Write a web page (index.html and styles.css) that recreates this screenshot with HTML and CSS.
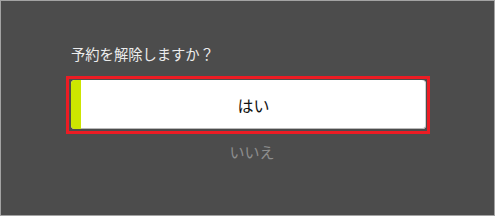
FILE: index.html
```html
<!DOCTYPE html>
<html lang="ja">
<head>
<meta charset="utf-8">
<link rel="stylesheet" href="styles.css">
</head>
<body>
<div class="dialog">
  <div class="title">予約を解除しますか？</div>
  <div class="focus">
    <div class="btn">
      <span class="strip"></span>
      <span class="label">はい</span>
    </div>
  </div>
  <div class="no">いいえ</div>
</div>
</body>
</html>
```
FILE: styles.css
```css
html, body {
  margin: 0;
  padding: 0;
}
body {
  width: 495px;
  height: 216px;
  box-sizing: border-box;
  border: 1px solid #a3a3a3;
  background: #4c4c4c;
  font-family: "Noto Sans CJK JP", "Noto Sans", sans-serif;
  overflow: hidden;
}
.dialog {
  padding-top: 43px;
  padding-left: 65px;
}
.title {
  margin-left: 5px;
  font-size: 14.3px;
  line-height: 20px;
  color: #ececec;
}
.focus {
  margin-top: 12px;
  width: 364px;
  height: 58px;
  box-sizing: border-box;
  border: 3px solid #ec1c24;
  padding: 1px 1px 2px 2px;
}
.btn {
  display: flex;
  height: 49px;
  background: #fff;
  border-radius: 4px;
  overflow: hidden;
  box-shadow: inset 0 -1px 0 #b8b8b8, inset -1px 0 0 #d0d0d0;
}
.strip {
  width: 10px;
  flex: none;
  background: #cde600;
}
.label {
  flex: 1;
  display: flex;
  align-items: center;
  justify-content: center;
  font-size: 16px;
  color: #111;
}
.no {
  width: 364px;
  margin-top: 8px;
  padding-left: 8px;
  box-sizing: border-box;
  text-align: center;
  font-size: 15px;
  line-height: 20px;
  color: #8e8e8e;
}
```
